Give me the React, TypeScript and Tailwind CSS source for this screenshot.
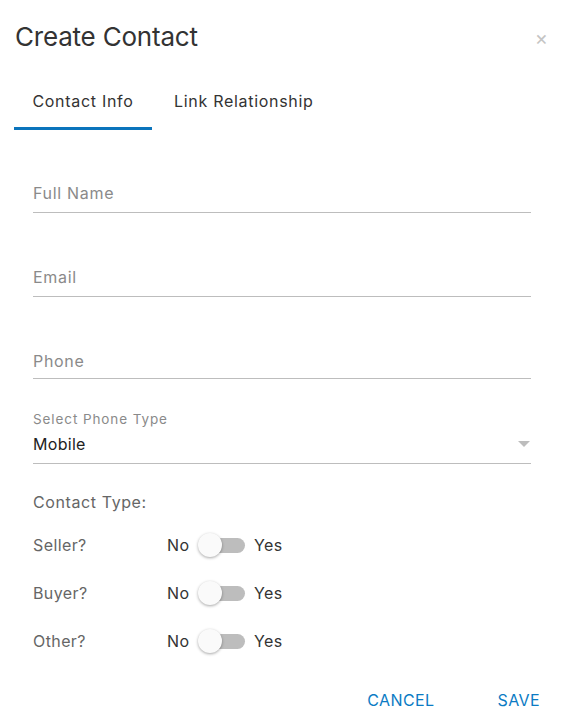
import React from 'react'

const sans = "font-['Inter','Lato',sans-serif]"

function TextField({ placeholder }: { placeholder: string }) {
  return (
    <div className="h-[84px] flex flex-col justify-end">
      <div className="text-[16px] text-[#8a8a8a] pb-[9px] leading-[20px] tracking-[0.7px]">
        {placeholder}
      </div>
      <div className="h-px bg-[#bdbdbd]" />
    </div>
  )
}

function Toggle({ label }: { label: string }) {
  return (
    <div className="flex items-center h-[48px] tracking-[0.4px]">
      <span className="w-[134px] text-[16px] text-[#666]">{label}</span>
      <span className="w-[31px] text-[16px] text-[#333]">No</span>
      <div className="relative w-[47px] h-[24px] mr-[9px]">
        <div className="absolute left-[6px] right-0 top-[5px] h-[15px] rounded-full bg-[#bdbdbd]" />
        <div className="absolute left-0 top-0 w-[24px] h-[24px] rounded-full bg-[#fafafa] shadow-[0_1px_3px_rgba(0,0,0,0.35)]" />
      </div>
      <span className="text-[16px] text-[#333]">Yes</span>
    </div>
  )
}

export default function App() {
  return (
    <div className={`${sans} w-[563px] h-[727px] bg-white relative`}>
      <div className="flex items-start justify-between pl-[15px] pr-[15px] pt-[20px]">
        <h1 className="text-[26px] leading-[34px] text-[#333] tracking-[-0.2px]">Create Contact</h1>
        <button className="text-[#c4c4c4] text-[20px] leading-none mt-[8px]">×</button>
      </div>

      <div className="flex pl-[14px] mt-[37px] tracking-[0.7px]">
        <div className="w-[138px] flex flex-col">
          <div className="text-[16px] text-[#333] text-center h-[36px] leading-[20px]">Contact Info</div>
          <div className="h-[3px] bg-[#0b74bc]" />
        </div>
        <div className="text-[16px] text-[#333] pl-[22px] leading-[20px]">Link Relationship</div>
      </div>

      <div className="px-[33px] pr-[32px]">
        <div className="mt-[-1px]">
          <TextField placeholder="Full Name" />
          <TextField placeholder="Email" />
          <div className="h-[82px] flex flex-col justify-end">
            <div className="text-[16px] text-[#8a8a8a] pb-[7px] leading-[20px] tracking-[0.7px]">Phone</div>
            <div className="h-px bg-[#bdbdbd]" />
          </div>
        </div>

        <div className="pt-[32px]">
          <div className="text-[13.5px] text-[#8a8a8a] leading-[16px] tracking-[0.9px]">Select Phone Type</div>
          <div className="flex items-center justify-between mt-[7px] pb-[9px]">
            <span className="text-[16px] text-[#222] leading-[20px] tracking-[0.3px]">Mobile</span>
            <svg width="12" height="6" viewBox="0 0 12 6" className="mr-[1px]">
              <path d="M0 0h12L6 6z" fill="#bdbdbd" />
            </svg>
          </div>
          <div className="h-px bg-[#bdbdbd]" />
        </div>

        <div className="mt-[28px] text-[16px] text-[#666] leading-[20px] tracking-[0.6px]">Contact Type:</div>
        <div className="mt-[9px]">
          <Toggle label="Seller?" />
          <Toggle label="Buyer?" />
          <Toggle label="Other?" />
        </div>
      </div>

      <div className="flex justify-end gap-[63px] pr-[23px] mt-[23px]">
        <button className="text-[16px] text-[#0b7bc4] tracking-[0.4px]">CANCEL</button>
        <button className="text-[16px] text-[#0b7bc4] tracking-[0.4px]">SAVE</button>
      </div>
    </div>
  )
}
